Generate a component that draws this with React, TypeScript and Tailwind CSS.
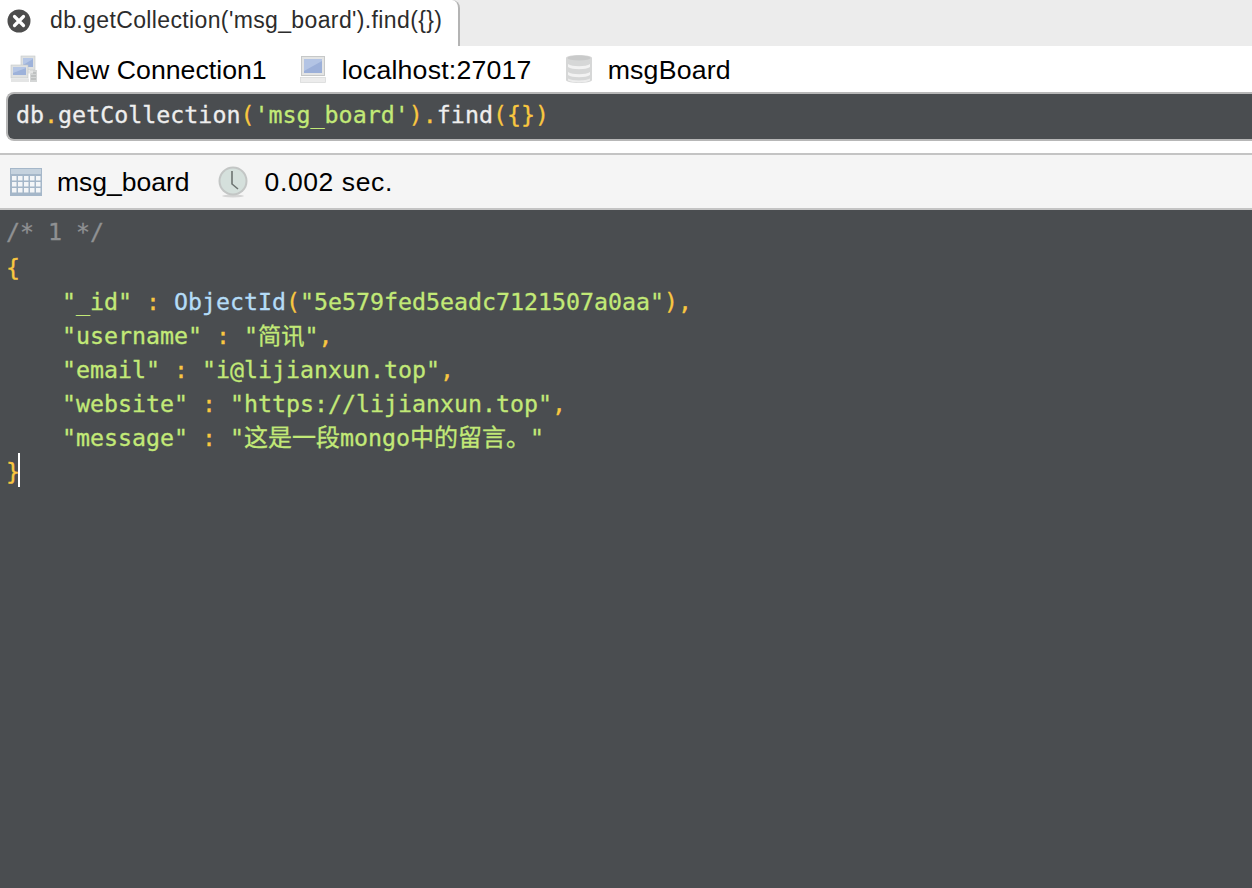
import React from 'react';

const SANS = 'font-["Liberation_Sans",Arial,sans-serif]';

const CloseIcon = () => (
  <svg width="24" height="24" viewBox="0 0 24 24">
    <circle cx="12" cy="12" r="11.5" fill="#4d4d4d" />
    <path d="M7.5 7.5l9 9M16.5 7.5l-9 9" stroke="#fff" strokeWidth="3.2" strokeLinecap="round" />
  </svg>
);

const Monitor = ({ x, y, w, h }: { x: number; y: number; w: number; h: number }) => (
  <g>
    <rect x={x} y={y} width={w} height={h} fill="#dfe1e1" stroke="#c4c7c7" strokeWidth="0.6" />
    <rect x={x + 2} y={y + 2} width={w - 4} height={h - 5} fill="#9db2da" />
    <path d={`M${x + 2} ${y + h - 5}L${x + w - 2} ${y + 3}V${y + 2}H${x + 2}Z`} fill="#b5c6e5" />
  </g>
);

const NetworkIcon = () => (
  <svg width="28" height="28" viewBox="0 0 28 28">
    <rect x="20" y="15" width="7" height="12" fill="#d4d6d6" />
    <path d="M21 18h5M21 21h5M21 24h5" stroke="#a9acac" strokeWidth="1" />
    <Monitor x={11} y={1} w={14} h={14} />
    <rect x="13" y="15.500" width="10" height="3" fill="#e4e5e5" />
    <Monitor x={1} y={10} w={17} h={13} />
    <rect x="1" y="23.500" width="18" height="3.500" fill="#e4e5e5" />
  </svg>
);

const ComputerIcon = () => (
  <svg width="28" height="30" viewBox="0 0 28 30">
    <rect x="2.500" y="2.500" width="23" height="19" fill="#e3e4e4" stroke="#c6c8c8" />
    <rect x="5" y="5" width="18" height="14" fill="#9cb0d9" />
    <path d="M5 17L23 7V5H5Z" fill="#b3c4e4" />
    <rect x="1.500" y="23.500" width="25" height="5" fill="#ececec" stroke="#d6d7d7" strokeWidth="0.7" />
  </svg>
);

const DatabaseIcon = () => (
  <svg width="30" height="34" viewBox="0 0 30 34">
    <path d="M2 6C2 2 28 2 28 6V28C28 32 2 32 2 28Z" fill="#d6d7d7" />
    <ellipse cx="15" cy="6" rx="11.500" ry="2.600" fill="#c9caca" />
    <path d="M4 12C8 15 22 15 26 12V15C22 18 8 18 4 15Z" fill="#f2f2f2" />
    <path d="M4 20C8 23 22 23 26 20V23C22 26 8 26 4 23Z" fill="#f2f2f2" />
    <path d="M4 26.500C8 29 22 29 26 26.500V28.500C22 31 8 31 4 28.500Z" fill="#ececec" />
  </svg>
);

const TableIcon = () => (
  <svg width="32" height="28" viewBox="0 0 32 28">
    <rect x="0" y="0" width="32" height="28" fill="#a5b7c9" />
    <rect x="1" y="1" width="30" height="5" fill="#c5d2de" />
    {[8, 14, 20].map(y =>
      [2, 8, 14, 20, 26].map(x => <rect key={`${x}-${y}`} x={x} y={y} width="4.500" height="4.500" fill="#f4f6f8" />)
    )}
  </svg>
);

const ClockIcon = () => (
  <svg width="32" height="32" viewBox="0 0 32 32">
    <ellipse cx="16" cy="30" rx="11" ry="1.500" fill="#d5d5d5" />
    <circle cx="16" cy="15" r="14.500" fill="#c3c6c5" />
    <circle cx="16" cy="15" r="12.500" fill="#d5e0dc" />
    <path d="M15 5V18L21 23" fill="none" stroke="#6d7472" strokeWidth="1.600" />
  </svg>
);

const Y = ({ children }: { children: React.ReactNode }) => <span className="text-[#f9c740]">{children}</span>;
const G = ({ children }: { children: React.ReactNode }) => <span className="text-[#c2e977]">{children}</span>;

const Crumb = ({ icon, label, iconClass, labelClass }: { icon: React.ReactNode; label: string; iconClass: string; labelClass: string }) => (
  <div className="flex items-center">
    <div className={iconClass}>{icon}</div>
    <span className={labelClass}>{label}</span>
  </div>
);

const Field = ({ name, children }: { name: string; children: React.ReactNode }) => (
  <div className="pl-[56px]">
    <G>"{name}"</G> <Y>:</Y> {children}
  </div>
);

export default function App() {
  return (
    <div className={`w-[1252px] h-[888px] overflow-hidden flex flex-col bg-white ${SANS}`}>
      {/* Tabs */}
      <div className="h-[46px] flex bg-[#ececec]">
        <div className="w-[460px] flex items-center pl-[7px] pb-[5px] bg-white border-r-2 border-[#b4b4b4] rounded-tr-lg">
          <CloseIcon />
          <span className="ml-[19px] text-[23px] tracking-[0.37px] text-[#2c2c2c]">db.getCollection('msg_board').find({'{}'})</span>
        </div>
      </div>

      {/* Connection breadcrumb */}
      <div className="h-[46px] flex items-center text-[26.700px] text-black gap-[32px]">
        <Crumb icon={<NetworkIcon />} label="New Connection1" iconClass="ml-[10px] mr-[18px]" labelClass="pt-[2px]" />
        <Crumb icon={<ComputerIcon />} label="localhost:27017" iconClass="mr-[15px]" labelClass="pt-[2px] tracking-[0.2px]" />
        <Crumb icon={<DatabaseIcon />} label="msgBoard" iconClass="mr-[14px]" labelClass="pt-[2px] tracking-[0.2px]" />
      </div>

      {/* Query box */}
      <div className="pl-[6px]">
        <div className='h-[49px] pl-[8px] pb-[2px] flex items-center bg-[#4a4d50] border-2 border-r-0 border-[#b7b7b7] rounded-l-lg font-["DejaVu_Sans_Mono",monospace] text-[23.300px] text-[#eeeeee] whitespace-pre [-webkit-text-stroke:0.3px]'>
          <span>db</span><Y>.</Y><span>getCollection</span><Y>(</Y><G>'msg_board'</G><Y>)</Y><Y>.</Y><span>find</span><Y>({'{}'})</Y>
        </div>
      </div>

      <div className="h-[12px]" />

      {/* Result header */}
      <div className="h-[57px] flex items-center gap-[27px] bg-[#f5f5f5] border-y-2 border-[#c4c4c4] text-[26.500px] text-black">
        <Crumb icon={<TableIcon />} label="msg_board" iconClass="ml-[10px] mr-[15px]" labelClass="pt-[3px]" />
        <Crumb icon={<ClockIcon />} label="0.002 sec." iconClass="mr-[16px]" labelClass="pt-[3px] tracking-[0.6px]" />
      </div>

      {/* Result document */}
      <div className='flex-1 pt-[5px] pl-[6px] bg-[#4a4d50] font-["DejaVu_Sans_Mono","Noto_Sans_CJK_SC",monospace] text-[23.250px] leading-[34px] whitespace-pre [-webkit-text-stroke:0.3px]'>
        <div className="text-[#8f9193] mb-[2px]">/* 1 */</div>
        <div><Y>{'{'}</Y></div>
        <Field name="_id">
          <span className="text-[#b4dcf7]">ObjectId</span><Y>(</Y><G>"5e579fed5eadc7121507a0aa"</G><Y>)</Y><Y>,</Y>
        </Field>
        <Field name="username"><G>"简讯"</G><Y>,</Y></Field>
        <Field name="email"><G>"i@lijianxun.top"</G><Y>,</Y></Field>
        <Field name="website"><G>"https://lijianxun.top"</G><Y>,</Y></Field>
        <Field name="message">
          <G>"<span className="text-[24px]">这是一段</span>mongo<span className="text-[24px]">中的留言。</span>"</G>
        </Field>
        <div className="flex items-start">
          <Y>{'}'}</Y>
          <div className="w-[2px] h-[34px] bg-white -ml-[2px] -mt-[2px]" />
        </div>
      </div>
    </div>
  );
}
